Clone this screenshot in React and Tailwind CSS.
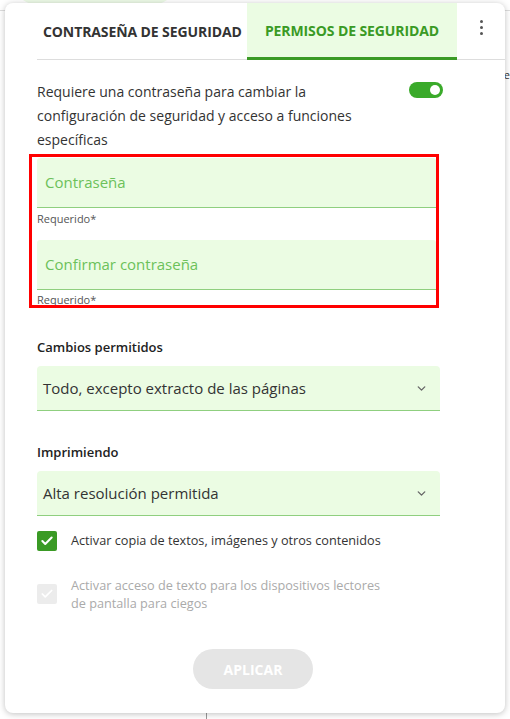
import React, { useState } from 'react';
import { ChevronDown, Check } from 'lucide-react';

function Field({ label, last }) {
  return (
    <div>
      <div className="h-[50px] bg-[#ebfce3] border-b border-[#8fcf7f] rounded-t-[3px] flex items-center px-2">
        <span className="text-[15px] text-[#6cc15a]">{label}</span>
      </div>
      <p className={`text-[11px] text-[#555] ${last ? 'leading-[20px]' : 'leading-[22px]'}`}>Requerido*</p>
    </div>
  );
}

function Select({ label, value, first }) {
  return (
    <div className={first ? 'mt-[30px]' : 'mt-[32px]'}>
      <p className="text-[13px] font-semibold text-[#222] leading-[18px] mb-[10px]">{label}</p>
      <div className="w-[403px] h-[45px] bg-[#ebfce3] border-b border-[#8fcf7f] rounded-t-[4px] flex items-center justify-between pl-[6px] pr-[12px]">
        <span className="text-[15px] text-[#333]">{value}</span>
        <ChevronDown size={13} strokeWidth={2.5} className="text-[#666]" />
      </div>
    </div>
  );
}

export default function App() {
  const [copy, setCopy] = useState(true);

  return (
    <div className="relative w-[510px] h-[719px] bg-white overflow-hidden" style={{ fontFamily: '"Open Sans", "Noto Sans", sans-serif' }}>
      {/* page behind the dialog */}
      <div className="absolute left-[15px] top-[-20px] w-[160px] h-[24px] rounded-b-[20px] bg-[#eefbe8]" />
      <div className="absolute left-0 top-[10px] w-full h-px bg-[#ddd]" />
      <div className="absolute right-0 top-[67px] text-[11px] text-[#333]">e</div>
      <div className="absolute left-[206px] top-[700px] w-px h-[19px] bg-[#999]" />

      {/* Dialog */}
      <div className="absolute left-[5px] top-[3px] w-[500px] h-[710px] bg-white rounded-[8px] shadow-[0_1px_6px_rgba(0,0,0,0.25)] flex flex-col">
        {/* Tabs */}
        <div className="shrink-0 flex items-stretch h-[57px] border-b border-[#ddd] ml-[32px]">
          <div className="w-[210px] flex items-center pl-[6px]">
            <span className="text-[14px] font-bold text-[#333] tracking-[-0.1px]">CONTRASEÑA DE SEGURIDAD</span>
          </div>
          <div className="w-[210px] flex items-center justify-center bg-[#ebfce3] border-b-[3px] border-[#3a9a25] mb-[-1px]">
            <span className="text-[14px] font-bold text-[#3a9a25] tracking-[-0.1px]">PERMISOS DE SEGURIDAD</span>
          </div>
          <div className="flex-1 flex items-center justify-center pb-[8px]">
            <div className="flex flex-col gap-[3px]">
              <span className="w-[3px] h-[3px] rounded-full bg-[#555]" />
              <span className="w-[3px] h-[3px] rounded-full bg-[#555]" />
              <span className="w-[3px] h-[3px] rounded-full bg-[#555]" />
            </div>
          </div>
        </div>

        {/* Body */}
        <div className="pl-[32px] pr-[62px] pt-[20px]">
          <div className="flex justify-between">
            <p className="w-[340px] text-[14px] leading-[24px] text-[#333]">
              Requiere una contraseña para cambiar la configuración de seguridad y acceso a funciones específicas
            </p>
            <div className="w-[34px] h-[16px] rounded-full bg-[#3aaa2a] mt-[2px] flex items-center justify-end pr-[3px]">
              <span className="w-[10px] h-[10px] rounded-full bg-white" />
            </div>
          </div>

          <div className="mt-[2px] ml-[-8px] w-[410px] h-[154px] overflow-hidden border-[3px] border-[#ff0000] pl-[5px] pt-[1px]">
            <Field label="Contraseña" />
            <div className="mt-[10px]" />
            <Field label="Confirmar contraseña" last />
          </div>

          <Select first label="Cambios permitidos" value="Todo, excepto extracto de las páginas" />
          <Select label="Imprimiendo" value="Alta resolución permitida" />

          <div className="mt-[15px] flex items-center gap-[14px]">
            <button
              onClick={() => setCopy(!copy)}
              className={`w-[20px] h-[20px] rounded-[2px] flex items-center justify-center ${copy ? 'bg-[#3a9a25]' : 'bg-white border border-[#999]'}`}
            >
              {copy && <Check size={14} strokeWidth={3.5} className="text-white" />}
            </button>
            <span className="text-[12.7px] text-[#333]">Activar copia de textos, imágenes y otros contenidos</span>
          </div>

          <div className="mt-[25px] flex items-start gap-[14px]">
            <div className="w-[20px] h-[20px] rounded-[2px] bg-[#ececec] flex items-center justify-center mt-[8px]">
              <Check size={14} strokeWidth={3} className="text-white" />
            </div>
            <span className="w-[320px] text-[12.7px] leading-[18px] text-[#aaa]">
              Activar acceso de texto para los dispositivos lectores de pantalla para ciegos
            </span>
          </div>

          <div className="mt-[37px] flex justify-center pl-[26px]">
            <button className="w-[120px] h-[40px] rounded-full bg-[#e5e5e5] text-white text-[14px] font-bold">
              APLICAR
            </button>
          </div>
        </div>
      </div>
    </div>
  );
}
